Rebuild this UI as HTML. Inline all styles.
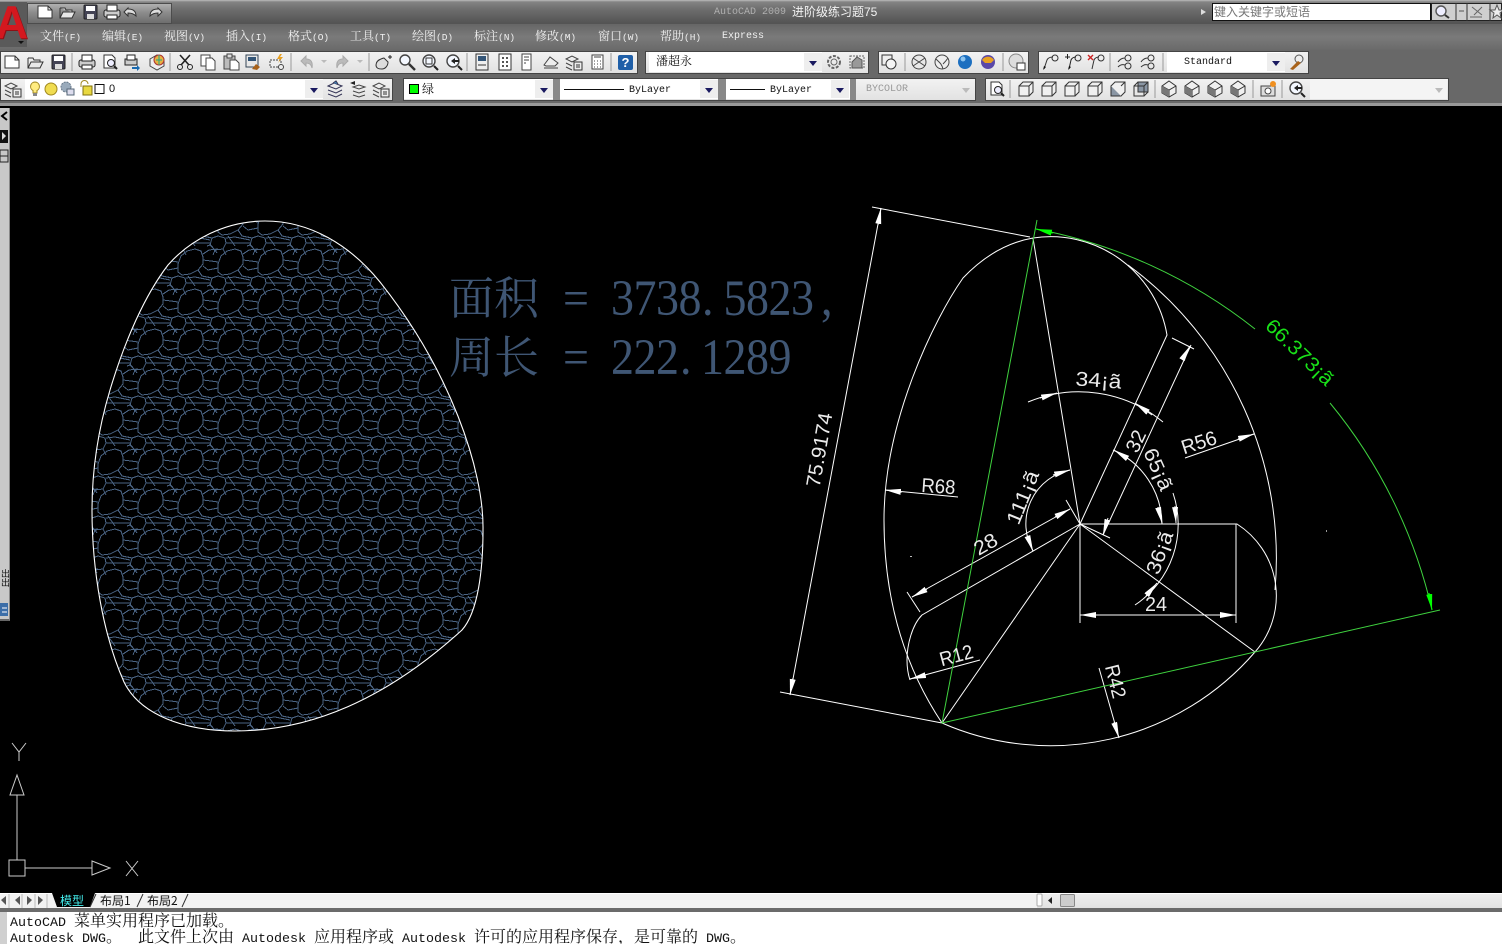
<!DOCTYPE html>
<html lang="zh"><head><meta charset="utf-8"><title>AutoCAD 2009</title>
<style>
html,body{margin:0;padding:0;width:1502px;height:944px;overflow:hidden;background:#6a6a6a}
body{position:relative;font-family:"Liberation Sans","Noto Serif CJK SC",sans-serif}
.a{position:absolute;white-space:pre}
.m{position:absolute;top:29px;font:12px/16px "Liberation Mono","Noto Serif CJK SC",serif;color:#f0f0f0}
.m i{font-style:normal;font-size:9.5px}
.bar{position:absolute;background:linear-gradient(#f2f2f2,#e2e2e2);border:1px solid #444;box-sizing:border-box}
.cb{position:absolute;background:#fff;height:20px}
.arr{position:absolute;background:#eee;width:18px;height:18px}
.arr:after{content:"";position:absolute;left:5px;top:8px;border:4px solid transparent;border-top:5px solid #1a1a60;border-bottom:0}
.arr.g:after{border-top-color:#bbb}
.cmd{position:absolute;left:10px;font:16px/16px "Noto Serif CJK SC",serif;color:#111;white-space:pre}
.cmd b{font:13.33px/16px "Liberation Mono",monospace;font-weight:normal}
.big{position:absolute;font:45px/50px "Noto Serif CJK SC",serif;color:#3f5674;white-space:pre}
svg{position:absolute;left:0;top:0}
</style></head><body>

<!-- title bar / menu -->
<div class="a" style="left:0;top:0;width:1502px;height:24px;background:linear-gradient(#bdbdbd 0,#838383 2px,#6c6c6c 10px,#545454 23px)"></div>
<div class="a" style="left:0;top:24px;width:1502px;height:26px;background:linear-gradient(#666,#7a7a7a 50%,#6a6a6a)"></div>
<div class="a" style="left:0;top:50px;width:1502px;height:56px;background:#686868"></div>
<div class="a" style="left:0;top:103px;width:1502px;height:3px;background:#999"></div>
<div class="a" style="left:27px;top:3px;width:145px;height:21px;background:linear-gradient(#b0b0b0,#8c8c8c 45%,#6e6e6e);border:1px solid #4c4c4c;box-sizing:border-box"></div>
<div class="a" style="left:0;top:2px;width:27px;height:45px;background:#5a5a5a"></div>
<svg width="30" height="50" style="z-index:3"><text x="-4" y="39" font-family="Liberation Sans" font-weight="bold" font-size="46" fill="#8f1015">A</text><text x="-5" y="38" font-family="Liberation Sans" font-weight="bold" font-size="46" fill="#d4181f">A</text><path d="M18 41l6 0-3 3z" fill="#111"/></svg>
<div class="a" style="left:714px;top:6px;font:10px/14px 'Liberation Mono',monospace;color:#b0b0b0">AutoCAD 2009</div>
<div class="a" style="left:792px;top:5px;font:12px/15px 'Liberation Sans','Noto Sans CJK SC',sans-serif;color:#f2f2f2">进阶级练习题75</div>
<div class="a" style="left:1201px;top:9px;border-left:5px solid #ddd;border-top:3px solid transparent;border-bottom:3px solid transparent"></div>
<div class="a" style="left:1212px;top:3px;width:219px;height:18px;background:#fff;border:1px solid #111;box-sizing:border-box;font:12px/15px 'Noto Sans CJK SC',sans-serif;color:#777;padding-left:1px">键入关键字或短语</div>
<div class="a" style="left:1431px;top:3px;width:71px;height:18px;background:#cfcfcf;border:1px solid #222;box-sizing:border-box"></div>

<div class="m" style="left:40px">文件<i>(F)</i></div><div class="m" style="left:102px">编辑<i>(E)</i></div><div class="m" style="left:164px">视图<i>(V)</i></div><div class="m" style="left:226px">插入<i>(I)</i></div><div class="m" style="left:288px">格式<i>(O)</i></div><div class="m" style="left:350px">工具<i>(T)</i></div><div class="m" style="left:412px">绘图<i>(D)</i></div><div class="m" style="left:474px">标注<i>(N)</i></div><div class="m" style="left:535px">修改<i>(M)</i></div><div class="m" style="left:598px">窗口<i>(W)</i></div><div class="m" style="left:660px">帮助<i>(H)</i></div><div class="m" style="left:722px;font-size:10px">Express</div>

<!-- row 1 bars -->
<div class="bar" style="left:0;top:51px;width:638px;height:23px"></div>
<div class="bar" style="left:645px;top:51px;width:224px;height:23px"></div>
<div class="bar" style="left:878px;top:51px;width:151px;height:23px"></div>
<div class="bar" style="left:1038px;top:51px;width:271px;height:23px"></div>
<div class="cb" style="left:649px;top:52px;width:173px"></div>
<div class="a" style="left:656px;top:53px;font:12px/16px 'Noto Serif CJK SC',serif;color:#111">潘超永</div>
<div class="arr" style="left:804px;top:53px"></div>
<div class="cb" style="left:1167px;top:52px;width:118px"></div>
<div class="a" style="left:1184px;top:56px;font:10px/14px 'Liberation Mono',monospace;color:#111">Standard</div>
<div class="arr" style="left:1267px;top:53px"></div>

<!-- row 2 bars -->
<div class="bar" style="left:0;top:78px;width:393px;height:23px"></div>
<div class="bar" style="left:403px;top:78px;width:573px;height:23px"></div>
<div class="bar" style="left:985px;top:78px;width:464px;height:23px"></div>
<div class="cb" style="left:25px;top:79px;width:298px"></div>
<div class="arr" style="left:305px;top:80px"></div>
<div class="a" style="left:109px;top:82px;font:11px/14px 'Liberation Sans',sans-serif;color:#111">0</div>
<div class="cb" style="left:404px;top:79px;width:149px"></div>
<div class="arr" style="left:535px;top:80px"></div>
<div class="a" style="left:409px;top:84px;width:10px;height:10px;background:#0f0;border:1px solid #000;box-sizing:border-box"></div>
<div class="a" style="left:422px;top:81px;font:12px/15px 'Noto Serif CJK SC',serif;color:#111">绿</div>
<div class="a" style="left:553px;top:79px;width:7px;height:21px;background:#888"></div>
<div class="cb" style="left:560px;top:79px;width:158px"></div>
<div class="a" style="left:564px;top:89px;width:60px;height:1px;background:#111"></div>
<div class="a" style="left:629px;top:84px;font:10px/14px 'Liberation Mono',monospace;color:#111">ByLayer</div>
<div class="arr" style="left:700px;top:80px"></div>
<div class="a" style="left:718px;top:79px;width:8px;height:21px;background:#888"></div>
<div class="cb" style="left:726px;top:79px;width:124px"></div>
<div class="a" style="left:730px;top:89px;width:35px;height:1px;background:#111"></div>
<div class="a" style="left:770px;top:84px;font:10px/14px 'Liberation Mono',monospace;color:#111">ByLayer</div>
<div class="arr" style="left:831px;top:80px"></div>
<div class="a" style="left:850px;top:79px;width:6px;height:21px;background:#888"></div>
<div class="a" style="left:866px;top:83px;font:10px/14px 'Liberation Mono',monospace;color:#999">BYCOLOR</div>
<div class="arr g" style="left:957px;top:80px;background:none"></div>
<div class="cb" style="left:1310px;top:79px;width:137px;background:#f4f4f4"></div>
<div class="arr g" style="left:1430px;top:80px;background:none"></div>

<!-- toolbar icons -->
<svg width="1502" height="106" style="z-index:2">
<defs>
<symbol id="new" viewBox="0 0 18 18"><path d="M2 3h10l4 4v8H2z" fill="#fff" stroke="#333"/><path d="M12 3v4h4" fill="none" stroke="#333"/></symbol>
<symbol id="open" viewBox="0 0 18 18"><path d="M2 5h5l1 2h6v2M2 5v10h12l3-6H5l-3 6" fill="#e8e8e8" stroke="#333"/></symbol>
<symbol id="save" viewBox="0 0 18 18"><rect x="3" y="2" width="13" height="14" rx="1" fill="#445" stroke="#222"/><rect x="5" y="3" width="9" height="5" fill="#fff"/><rect x="6" y="11" width="7" height="5" fill="#ddd"/></symbol>
<symbol id="print" viewBox="0 0 18 18"><rect x="1" y="7" width="16" height="7" rx="2" fill="#ccc" stroke="#222"/><rect x="4" y="2" width="10" height="6" fill="#fff" stroke="#222"/><rect x="4" y="12" width="10" height="4" fill="#fff" stroke="#222"/></symbol>
<symbol id="prev" viewBox="0 0 18 18"><path d="M3 2h8l3 3v10H3z" fill="#fff" stroke="#333"/><circle cx="10" cy="10" r="3.5" fill="#eef" stroke="#222"/><path d="M13 13l3 3" stroke="#222" stroke-width="2"/></symbol>
<symbol id="plot" viewBox="0 0 18 18"><rect x="2" y="6" width="12" height="6" fill="#ccc" stroke="#222"/><rect x="4" y="2" width="8" height="5" fill="#fff" stroke="#222"/><path d="M9 14h5v-2l3 3-3 3v-2H9z" fill="#1a6ab0"/></symbol>
<symbol id="pub" viewBox="0 0 18 18"><path d="M2 6l7-4 7 4v7l-7 4-7-4z" fill="#eee" stroke="#444"/><circle cx="11" cy="7" r="5" fill="#e8b040" stroke="#a33"/><path d="M8 7h6M11 2v10" stroke="#2a8" /></symbol>
<symbol id="cut" viewBox="0 0 18 18"><path d="M4 2l9 10M14 2L5 12" stroke="#222" stroke-width="1.6" fill="none"/><circle cx="4" cy="14" r="2.5" fill="none" stroke="#222"/><circle cx="14" cy="14" r="2.5" fill="none" stroke="#222"/></symbol>
<symbol id="copy" viewBox="0 0 18 18"><rect x="2" y="2" width="9" height="11" fill="#fff" stroke="#444"/><path d="M7 5h6l3 3v9H7z" fill="#fff" stroke="#444"/></symbol>
<symbol id="paste" viewBox="0 0 18 18"><rect x="2" y="3" width="11" height="13" fill="#bbb" stroke="#444"/><rect x="5" y="1" width="5" height="4" fill="#ddd" stroke="#444"/><path d="M8 7h6l3 3v7H8z" fill="#fff" stroke="#444"/></symbol>
<symbol id="match" viewBox="0 0 18 18"><rect x="2" y="2" width="12" height="12" fill="#e8e8e8" stroke="#345"/><rect x="4" y="4" width="8" height="4" fill="#357"/><path d="M8 16l4-5 4 3-3 3z" fill="#a8621a"/></symbol>
<symbol id="blk" viewBox="0 0 18 18"><rect x="2" y="7" width="11" height="7" fill="#eee" stroke="#444" stroke-dasharray="2 1"/><path d="M12 1l-3 5h3l-2 4 5-6h-3l2-3z" fill="#e8a020"/><circle cx="13" cy="14" r="2.5" fill="#eee" stroke="#444"/></symbol>
<symbol id="undo" viewBox="0 0 18 18"><path d="M8 3L3 8l5 5V10c3 0 5 1 6 5 1-6-1-9-6-9z" fill="#bbb" stroke="#aaa"/></symbol>
<symbol id="redo" viewBox="0 0 18 18"><path d="M10 3l5 5-5 5V10c-3 0-5 1-6 5-1-6 1-9 6-9z" fill="#bbb" stroke="#aaa"/></symbol>
<symbol id="pan" viewBox="0 0 18 18"><path d="M2 12c0-4 4-6 8-7l4 4c0 4-3 7-6 7-4 0-6-1-6-4z" fill="#ddd" stroke="#333"/><path d="M14 4h4M16 2v4" stroke="#222"/></symbol>
<symbol id="zoom" viewBox="0 0 18 18"><circle cx="7" cy="7" r="5" fill="#f4f8ff" stroke="#444" stroke-width="1.4"/><path d="M11 11l6 6" stroke="#333" stroke-width="2.4"/></symbol>
<symbol id="zoomw" viewBox="0 0 18 18"><circle cx="8" cy="8" r="6" fill="#f4f8ff" stroke="#444" stroke-width="1.4"/><rect x="5" y="5" width="6" height="6" fill="none" stroke="#333"/><path d="M13 13l4 4" stroke="#222" stroke-width="2"/></symbol>
<symbol id="zoomp" viewBox="0 0 18 18"><circle cx="8" cy="8" r="6" fill="#f4f8ff" stroke="#444" stroke-width="1.4"/><path d="M6 8l4-3v2h4v2h-4v2z" fill="#222"/><path d="M13 13l4 4" stroke="#222" stroke-width="2"/></symbol>
<symbol id="prop" viewBox="0 0 18 18"><rect x="3" y="1" width="12" height="16" fill="#eee" stroke="#333"/><rect x="5" y="3" width="8" height="5" fill="#357"/><path d="M5 12h8" stroke="#333"/></symbol>
<symbol id="grid" viewBox="0 0 18 18"><rect x="3" y="1" width="12" height="16" fill="#fff" stroke="#333"/><path d="M6 4h2v2H6zM10 4h2v2h-2zM6 8h2v2H6zM10 8h2v2h-2zM6 12h2v2H6zM10 12h2v2h-2z" fill="#555"/></symbol>
<symbol id="tool" viewBox="0 0 18 18"><rect x="4" y="1" width="9" height="16" fill="#fff" stroke="#444"/><path d="M6 4h5M6 7h5M6 10h2" stroke="#444"/></symbol>
<symbol id="sheet" viewBox="0 0 18 18"><path d="M2 12l6-8 8 6-3 3H4z" fill="#eee" stroke="#444"/><path d="M2 15h14" stroke="#444"/></symbol>
<symbol id="calc" viewBox="0 0 18 18"><rect x="4" y="2" width="11" height="14" fill="#fff" stroke="#444"/><path d="M6 4h7M6 8h1M9 8h1M12 8h1M6 11h1M9 11h1M12 11h1M6 14h1M9 14h1M12 14h1" stroke="#444"/></symbol>
<symbol id="help" viewBox="0 0 18 18"><rect x="1" y="2" width="15" height="15" rx="2" fill="#1f5fa8"/><text x="8.5" y="14" text-anchor="middle" font-family="Liberation Sans" font-weight="bold" font-size="13" fill="#fff">?</text></symbol>
<symbol id="gear" viewBox="0 0 18 18"><circle cx="9" cy="9" r="6" fill="none" stroke="#666" stroke-width="2" stroke-dasharray="3 1.5"/><circle cx="9" cy="9" r="3" fill="none" stroke="#666"/></symbol>
<symbol id="house" viewBox="0 0 18 18"><rect x="2" y="3" width="14" height="12" fill="none" stroke="#666" stroke-dasharray="2 1"/><path d="M4 9l5-5 5 3v8H4z" fill="#999" stroke="#555"/></symbol>
<symbol id="dvw" viewBox="0 0 18 18"><rect x="2" y="2" width="10" height="10" fill="#eee" stroke="#333"/><circle cx="11" cy="11" r="5" fill="#f4f4f4" stroke="#333"/></symbol>
<symbol id="wire" viewBox="0 0 18 18"><circle cx="9" cy="9" r="7" fill="#e8e8e8" stroke="#444"/><path d="M3 5l12 8M15 5L3 13" stroke="#444"/></symbol>
<symbol id="wire2" viewBox="0 0 18 18"><circle cx="9" cy="9" r="7" fill="#eee" stroke="#444"/><path d="M3 6c3 3 6 5 7 10M15 5c-2 3-4 5-5 6" stroke="#444" fill="none"/></symbol>
<symbol id="blue" viewBox="0 0 18 18"><circle cx="9" cy="9" r="7" fill="#1c6fc0"/><circle cx="7" cy="6" r="2.5" fill="#8cc4f0"/></symbol>
<symbol id="mat" viewBox="0 0 18 18"><circle cx="9" cy="9" r="7" fill="#5a48a8"/><path d="M3 7a7 7 0 0 1 12 0l-3 3H6z" fill="#e8a020"/></symbol>
<symbol id="lyr" viewBox="0 0 18 18"><circle cx="8" cy="8" r="7" fill="#ddd" stroke="#888"/><rect x="9" y="10" width="8" height="7" fill="#fff" stroke="#333"/></symbol>
<symbol id="lead" viewBox="0 0 18 18"><path d="M3 16l3-9c1-2 3-3 6-3" fill="none" stroke="#333"/><circle cx="14" cy="5" r="3" fill="none" stroke="#333"/><path d="M2 17l1-4 2 1z" fill="#111"/></symbol>
<symbol id="leadp" viewBox="0 0 18 18"><path d="M5 16l2-9c1-2 3-3 5-3M1 4h5M3.5 1v5" fill="none" stroke="#222"/><circle cx="14" cy="5" r="3" fill="none" stroke="#333"/><path d="M4 17l1-4 2 1z" fill="#111"/></symbol>
<symbol id="leadx" viewBox="0 0 18 18"><path d="M5 16l2-9c1-2 3-3 5-3" fill="none" stroke="#333"/><path d="M1 2l5 5M6 2L1 7" stroke="#c22" stroke-width="1.4"/><circle cx="14" cy="5" r="3" fill="none" stroke="#333"/></symbol>
<symbol id="lead2" viewBox="0 0 18 18"><circle cx="12" cy="5" r="3" fill="none" stroke="#333"/><circle cx="12" cy="13" r="3" fill="none" stroke="#333"/><path d="M2 9c2-3 4-4 7-4M2 14c2-2 4-3 7-2" fill="none" stroke="#333"/></symbol>
<symbol id="brush" viewBox="0 0 18 18"><circle cx="11" cy="6" r="4" fill="#eee" stroke="#555"/><path d="M2 16l8-8 3 2-8 7z" fill="#a8621a"/></symbol>
<symbol id="ly1" viewBox="0 0 18 18"><path d="M2 6l6-3 8 3-6 3zM2 10l8 3 6-3M2 14l8 3 6-3" fill="none" stroke="#335"/><path d="M7 3l3-2 2 3" fill="#48b" stroke="#335"/></symbol>
<symbol id="ly2" viewBox="0 0 18 18"><path d="M4 7l6-2 6 2-6 2zM4 11l6 2 6-2M4 15l6 2 6-2" fill="none" stroke="#444"/><path d="M6 1L1 3l5 2z" fill="#222"/></symbol>
<symbol id="ly3" viewBox="0 0 18 18"><path d="M1 6l6-3 6 3-6 3zM1 10l6 3M1 14l6 3" fill="none" stroke="#444"/><rect x="9" y="9" width="8" height="8" fill="#eee" stroke="#333"/><path d="M11 12h4M11 14h4" stroke="#333"/></symbol>
<symbol id="cube" viewBox="0 0 18 18"><path d="M2 6h10v10H2zM2 6l4-4h10v10l-4 4M12 6l4-4" fill="#f0f0f0" stroke="#333"/></symbol>
<symbol id="cubed" viewBox="0 0 18 18"><path d="M2 6h10v10H2z" fill="#8a96a4" stroke="#333"/><path d="M2 6l4-4h10v10l-4 4M12 6l4-4" fill="#f0f0f0" stroke="#333"/></symbol>
<symbol id="cubeb" viewBox="0 0 18 18"><path d="M6 2h10v10H6z" fill="#8a96a4" stroke="#333"/><path d="M2 6h10v10H2zM2 6l4-4M12 6l4-4M12 16l4-4" fill="none" stroke="#333"/></symbol>
<symbol id="iso" viewBox="0 0 18 18"><path d="M9 1l7 5v7l-7 4-7-4V6z" fill="#f0f0f0" stroke="#333"/><path d="M2 6l7 4 7-4M9 10v7" fill="none" stroke="#333"/><path d="M2 6l7 4v7l-7-4z" fill="#777"/></symbol>
<symbol id="cam" viewBox="0 0 18 18"><rect x="2" y="6" width="14" height="10" fill="#ddd" stroke="#444"/><circle cx="9" cy="11" r="3" fill="#fff" stroke="#444"/><circle cx="14" cy="4" r="3" fill="#f09020"/></symbol>
<symbol id="bulb" viewBox="0 0 12 16"><path d="M6 1a4.5 4.5 0 0 0-2 8.5V12h4V9.500A4.500 4.500 0 0 0 6 1z" fill="#ffec80" stroke="#a08820"/><rect x="4" y="12" width="4" height="3" fill="#888"/></symbol>
</defs>
<g fill="none">
<use href="#new" x="36" y="3" width="18" height="18"/><use href="#open" x="58" y="3" width="18" height="18"/><use href="#save" x="81" y="3" width="18" height="18"/><use href="#print" x="103" y="3" width="18" height="18"/>
<path d="M128 8l-4 4 4 4v-3c4 0 6 1 8 3 0-5-3-7-8-7zM158 8l4 4-4 4v-3c-4 0-6 1-8 3 0-5 3-7 8-7z" fill="#ddd" stroke="#333"/>

<use href="#new" x="3" y="53" width="18" height="18"/><use href="#open" x="26" y="53" width="18" height="18"/><use href="#save" x="49" y="53" width="18" height="18"/>
<use href="#print" x="78" y="53" width="18" height="18"/><use href="#prev" x="101" y="53" width="18" height="18"/><use href="#plot" x="123" y="53" width="18" height="18"/><use href="#pub" x="148" y="53" width="18" height="18"/>
<use href="#cut" x="176" y="53" width="18" height="18"/><use href="#copy" x="199" y="53" width="18" height="18"/><use href="#paste" x="222" y="53" width="18" height="18"/><use href="#match" x="244" y="53" width="18" height="18"/><use href="#blk" x="268" y="53" width="18" height="18"/>
<use href="#undo" x="298" y="53" width="18" height="18"/><use href="#redo" x="333" y="53" width="18" height="18"/>
<path d="M321 60h6l-3 3zM357 60h6l-3 3z" fill="#bbb"/>
<use href="#pan" x="374" y="53" width="18" height="18"/><use href="#zoom" x="398" y="53" width="18" height="18"/><use href="#zoomw" x="421" y="53" width="18" height="18"/><use href="#zoomp" x="445" y="53" width="18" height="18"/>
<use href="#prop" x="473" y="53" width="18" height="18"/><use href="#grid" x="496" y="53" width="18" height="18"/><use href="#tool" x="518" y="53" width="18" height="18"/><use href="#sheet" x="542" y="53" width="18" height="18"/><use href="#ly3" x="565" y="53" width="18" height="18"/><use href="#calc" x="588" y="53" width="18" height="18"/><use href="#help" x="617" y="53" width="18" height="18"/>
<use href="#gear" x="825" y="53" width="18" height="18"/><use href="#house" x="848" y="53" width="18" height="18"/>
<use href="#dvw" x="880" y="53" width="18" height="18"/><use href="#wire" x="910" y="53" width="18" height="18"/><use href="#wire2" x="933" y="53" width="18" height="18"/><use href="#blue" x="956" y="53" width="18" height="18"/><use href="#mat" x="979" y="53" width="18" height="18"/><use href="#lyr" x="1008" y="53" width="18" height="18"/>
<use href="#lead" x="1041" y="53" width="18" height="18"/><use href="#leadp" x="1064" y="53" width="18" height="18"/><use href="#leadx" x="1087" y="53" width="18" height="18"/><use href="#lead2" x="1116" y="53" width="18" height="18"/><use href="#lead2" x="1139" y="53" width="18" height="18"/><use href="#brush" x="1288" y="53" width="18" height="18"/>
<path d="M72 53v18M170 53v18M291 53v18M369 53v18M467 53v18M611 53v18M905 53v18M1003 53v18M1110 53v18M1163 53v18M1010 80v18M1155 80v18M1253 80v18M1282 80v18" stroke="#999"/>

<use href="#ly3" x="4" y="80" width="18" height="18"/>
<use href="#bulb" x="29" y="81" width="12" height="16"/>
<circle cx="51" cy="89" r="6" fill="#f0dc50" stroke="#a08820"/>
<circle cx="66" cy="87" r="5" fill="#9ab" stroke="#678" stroke-dasharray="2 1"/><rect x="67" y="89" width="7" height="6" fill="#dde" stroke="#567"/>
<path d="M81 87v-3a3.500 3.500 0 0 1 7 0" stroke="#a08820" fill="none"/><rect x="83" y="86" width="9" height="9" fill="#e8d840" stroke="#807010"/>
<rect x="95" y="84.500" width="9" height="9" fill="#fff" stroke="#111"/>
<use href="#ly1" x="326" y="80" width="18" height="18"/><use href="#ly2" x="349" y="80" width="18" height="18"/><use href="#ly3" x="372" y="80" width="18" height="18"/>
<use href="#prev" x="988" y="80" width="18" height="18"/>
<use href="#cube" x="1017" y="80" width="18" height="18"/><use href="#cube" x="1040" y="80" width="18" height="18"/><use href="#cube" x="1063" y="80" width="18" height="18"/><use href="#cube" x="1086" y="80" width="18" height="18"/><use href="#cubed" x="1109" y="80" width="18" height="18"/><use href="#cubeb" x="1132" y="80" width="18" height="18"/>
<use href="#iso" x="1160" y="80" width="18" height="18"/><use href="#iso" x="1183" y="80" width="18" height="18"/><use href="#iso" x="1206" y="80" width="18" height="18"/><use href="#iso" x="1229" y="80" width="18" height="18"/>
<use href="#cam" x="1259" y="80" width="18" height="18"/><use href="#zoomp" x="1288" y="80" width="18" height="18"/>
<circle cx="1441" cy="11" r="5" fill="#eef" stroke="#555" stroke-width="1.4"/><path d="M1445 15l4 3" stroke="#333" stroke-width="2"/>
<path d="M1456 3v18M1467 3v18M1490 3v18" stroke="#333"/><path d="M1459 11h5" stroke="#555"/><path d="M1472 7l10 8M1482 7l-8 8M1470 17h12" stroke="#666"/>
<path d="M1497 5l2 5h5l-4 3 1 5-4-3-4 3 1-5-4-3h5z" fill="#eee" stroke="#555"/>
</g>
</svg>

<!-- canvas -->
<div class="a" style="left:0;top:106px;width:1502px;height:787px;background:#000"></div>
<div class="a" style="left:0;top:108px;width:10px;height:513px;background:#c8c8c8;border-right:1px solid #888;border-bottom:2px solid #666;box-sizing:border-box"></div>
<svg width="12" height="640" style="z-index:2"><path d="M7 112l-5 4 5 4" fill="none" stroke="#000" stroke-width="2"/><rect x="0" y="130" width="8" height="13" fill="#111"/><path d="M2 132l4 4-4 4z" fill="#ddd"/><rect x="0" y="150" width="8" height="12" fill="none" stroke="#222"/><path d="M0 156h8" stroke="#222"/><rect x="0" y="603" width="8" height="13" fill="#3c6ea8"/><path d="M2 608h5M2 612h5" stroke="#fff"/></svg>
<div class="a" style="left:-2px;top:569px;width:12px;font:9px/10px 'Noto Sans CJK SC',sans-serif;color:#111;writing-mode:vertical-rl">出出</div>

<div class="big" style="left:449px;top:270px">面积</div>
<div class="big" style="left:449px;top:329px">周长</div>

<svg width="1502" height="894" viewBox="0 0 1502 894" style="z-index:2">
<defs>
<g id="cell" fill="none" stroke="#4a6484" stroke-width="1" shape-rendering="crispEdges">
<path d="M18 24L21 16 27 11 35 9 41 11 43 17 43 24 38 30 30 34 22 35 18 32Z"/>
<path d="M12 38L18 36 25 38 26 43 23 49 15 50 10 45Z"/>
<path d="M43 14L49 10 58 9M43 20L51 21 58 22M43 26L48 30 58 28M50 4L57 13"/>
<path d="M38 30L42 36 52 38M26 38L35 37 50 40M26 43L34 43 50 43M28 36L35 46M8 37L12 38M7 46L10 45M15 50L13 55M23 49L26 55"/>
</g>
<pattern id="stone" patternUnits="userSpaceOnUse" x="200" y="400" width="40" height="40">
<use href="#cell"/><use href="#cell" x="-40"/><use href="#cell" y="-40"/><use href="#cell" x="-40" y="-40"/>
</pattern>
<marker id="aw" markerUnits="userSpaceOnUse" markerWidth="18" markerHeight="8" refX="16" refY="3" orient="auto"><path d="M0 0L16 3 0 6Z" fill="#fff"/></marker>
<marker id="ag" markerUnits="userSpaceOnUse" markerWidth="18" markerHeight="8" refX="16" refY="3" orient="auto"><path d="M0 0L16 3 0 6Z" fill="#0f0"/></marker>
</defs>

<path fill="url(#stone)" stroke="#fff" stroke-width="1.1" d="M265,221 C225,221 190,240 168,265 C145,295 125,340 110,390 C98,430 92,470 92,510 C92,570 103,635 124,682 C140,715 185,731 235,731 C310,731 385,700 462,630 C478,612 483,570 483,530 C484,470 450,370 380,282 C350,245 310,221 265,221 Z"/>

<!-- area / perimeter numbers -->
<g font-family="Liberation Serif,serif" font-size="46" fill="#3f5674">
<text transform="translate(0,315) scale(1,1.1)" x="563 611 633.500 656 678.500 702 723.500 746 768.500 791 821">=3738.5823,</text>
<text transform="translate(0,374) scale(1,1.1)" x="563 611 633.500 656 680 701 723.500 746 768.500">=222.1289</text>
</g>

<g fill="none" stroke="#fff" stroke-width="1">
<!-- outline -->
<path d="M1033,238 C1005,243 982,258 963,278 C935,318 884,420 884,520 C884,590 900,660 942,723 A270,270 0 0 0 1255,652 A85,85 0 0 0 1237,524 H1080"/>
<path d="M1033,238 A118,118 0 0 1 1167,335 L1080,524"/>
<path d="M1128,265 A364,364 0 0 1 1275,590"/>
<path d="M1080,524 L922,615 C912,625 907,645 907,660 C907,668 908,674 910,680"/>
<path d="M1033,238L1080,524M1080,524L942,723M1080,524L1255,652"/>
<!-- dims -->
<path d="M872,207L1030,237M780,692L942,723M881,208L790,695"/>
<line x1="878" y1="225" x2="881" y2="208" marker-end="url(#aw)"/>
<line x1="793" y1="678" x2="790" y2="695" marker-end="url(#aw)"/>
<path d="M1028,402 A132,132 0 0 1 1163,422"/>
<line x1="1040" y1="398" x2="1057" y2="393" marker-end="url(#aw)"/>
<line x1="1152" y1="415" x2="1135" y2="403" marker-end="url(#aw)"/>
<path d="M1172,338L1194,349M1191,345L1103,535M1080,524L1110,538"/>
<line x1="1108" y1="518" x2="1103" y2="535" marker-end="url(#aw)"/>
<line x1="1183" y1="358" x2="1190" y2="346" marker-end="url(#aw)"/>
<path d="M1113,450 A82,82 0 0 1 1162,524"/>
<line x1="1130" y1="460" x2="1114" y2="450" marker-end="url(#aw)"/>
<line x1="1158" y1="507" x2="1162" y2="523" marker-end="url(#aw)"/>
<path d="M1173,493 A97,97 0 0 1 1135,605"/>
<line x1="1175" y1="506" x2="1176" y2="523" marker-end="url(#aw)"/>
<line x1="1146" y1="596" x2="1157" y2="583" marker-end="url(#aw)"/>
<path d="M1070,470 A55,55 0 0 0 1033,551"/>
<line x1="1053" y1="475" x2="1070" y2="470" marker-end="url(#aw)"/>
<line x1="1027" y1="535" x2="1033" y2="551" marker-end="url(#aw)"/>
<path d="M1070,509L912,597M1066,500L1080,524M907,592L920,612"/>
<line x1="1055" y1="517" x2="1070" y2="509" marker-end="url(#aw)"/>
<line x1="927" y1="589" x2="912" y2="597" marker-end="url(#aw)"/>
<path d="M980,660L910,679"/>
<line x1="926" y1="675" x2="910" y2="679" marker-end="url(#aw)"/>
<path d="M958,497L885,490"/>
<line x1="902" y1="492" x2="885" y2="490" marker-end="url(#aw)"/>
<path d="M1185,458L1254,434"/>
<line x1="1238" y1="439" x2="1254" y2="434" marker-end="url(#aw)"/>
<path d="M1099,668L1119,738"/>
<line x1="1114" y1="722" x2="1119" y2="738" marker-end="url(#aw)"/>
<path d="M1080,524V623M1236,524V623M1080,615H1236"/>
<line x1="1097" y1="615" x2="1080" y2="615" marker-end="url(#aw)"/>
<line x1="1219" y1="615" x2="1236" y2="615" marker-end="url(#aw)"/>
</g>
<g fill="none" stroke="#3fd23f" stroke-width="1">
<path d="M1037,220L942,723L1440,610"/>
<path d="M1036,229 A503,503 0 0 1 1255,329"/>
<path d="M1330,403 A503,503 0 0 1 1432,610"/>
<line x1="1053" y1="233" x2="1036" y2="229" stroke="#0f0" marker-end="url(#ag)"/>
<line x1="1429" y1="593" x2="1432" y2="610" stroke="#0f0" marker-end="url(#ag)"/>
</g>
<rect x="910" y="556" width="2" height="1" fill="#bbb"/><rect x="1326" y="530" width="1" height="2" fill="#999"/>

<g font-family="Liberation Sans,sans-serif" font-size="20" fill="#fff" fill-opacity=".92" text-anchor="middle">
<text transform="translate(826,451) rotate(-80)" textLength="75" lengthAdjust="spacingAndGlyphs">75.9174</text>
<text transform="translate(1098,387) rotate(4)" textLength="46" lengthAdjust="spacingAndGlyphs">34¡ã</text>
<text transform="translate(1142,444) rotate(-65)" textLength="22" lengthAdjust="spacingAndGlyphs">32</text>
<text transform="translate(1152,472) rotate(66)" textLength="44" lengthAdjust="spacingAndGlyphs">65¡ã</text>
<text transform="translate(1166,555) rotate(-70)" textLength="44" lengthAdjust="spacingAndGlyphs">36¡ã</text>
<text transform="translate(1029,500) rotate(-68)" textLength="56" lengthAdjust="spacingAndGlyphs">111¡ã</text>
<text transform="translate(989,550) rotate(-30)" textLength="24" lengthAdjust="spacingAndGlyphs">28</text>
<text transform="translate(938,493) rotate(4)" textLength="34" lengthAdjust="spacingAndGlyphs">R68</text>
<text transform="translate(1201,449) rotate(-18)" textLength="36" lengthAdjust="spacingAndGlyphs">R56</text>
<text transform="translate(958,662) rotate(-15)" textLength="34" lengthAdjust="spacingAndGlyphs">R12</text>
<text transform="translate(1109,683) rotate(76)" textLength="34" lengthAdjust="spacingAndGlyphs">R42</text>
<text x="1156" y="611" textLength="22" lengthAdjust="spacingAndGlyphs">24</text>
<text transform="translate(1295,357) rotate(44)" textLength="86" lengthAdjust="spacingAndGlyphs" fill="#19e019" fill-opacity="1">66.373¡ã</text>
</g>

<!-- UCS -->
<g fill="none" stroke="#ccc" stroke-width="1">
<path d="M17,795V860M25,868H92M9,860h16v16H9z"/>
<path d="M17,775l7,20H10zM92,861l18,7-18,7z"/>
<path d="M12,743l7,9 7-9M19,752v9M126,861l12,15M138,861l-12,15"/>
</g>
</svg>

<!-- bottom -->
<div class="a" style="left:0;top:893px;width:1502px;height:15px;background:#f2f2f2;border-top:1px solid #fff;box-sizing:border-box"></div>
<div class="a" style="left:1037px;top:894px;width:465px;height:14px;background:linear-gradient(#eee,#e2e2e2)"></div>
<div class="a" style="left:0;top:908px;width:1502px;height:4px;background:#6b6b6b"></div>
<div class="a" style="left:0;top:912px;width:1502px;height:32px;background:#fff"></div>
<div class="a" style="left:0;top:912px;width:7px;height:32px;background:#d0d0d0"></div>
<svg width="1502" height="944" style="z-index:3">
<path d="M1 900l5-4v9zM15 900l5-4v9zM27 896l5 4-5 5zM38 896l5 4-5 5z" fill="#555"/>
<path d="M9 894v14M22 894v14M35 894v14M47 894v14" stroke="#bbb"/>
<path d="M52 893h43l-5 14H57z" fill="#000"/>
<path d="M90 907l6-13M137 907l6-13M182 907l6-13" fill="none" stroke="#333"/>
<rect x="1037" y="894" width="5" height="12" rx="1" fill="#fff" stroke="#aaa"/>
<path d="M1052 897v7l-4-3.500z" fill="#222"/>
<rect x="1060.500" y="894.500" width="14" height="12" rx="1" fill="#ccc" stroke="#888"/>
</svg>
<div class="a" style="left:60px;top:893px;font:12px/15px 'Noto Sans CJK SC',sans-serif;color:#4ee;z-index:4">模型</div>
<div class="a" style="left:100px;top:893px;font:12px/15px 'Noto Sans CJK SC',sans-serif;color:#111;z-index:4">布局1</div>
<div class="a" style="left:147px;top:893px;font:12px/15px 'Noto Sans CJK SC',sans-serif;color:#111;z-index:4">布局2</div>
<div class="cmd" style="top:912px"><b>AutoCAD </b>菜单实用程序已加载。</div>
<div class="cmd" style="top:928px"><b>Autodesk DWG</b>。<b>  </b>此文件上次由<b> Autodesk </b>应用程序或<b> Autodesk </b>许可的应用程序保存，是可靠的<b> DWG</b>。</div>
</body></html>
